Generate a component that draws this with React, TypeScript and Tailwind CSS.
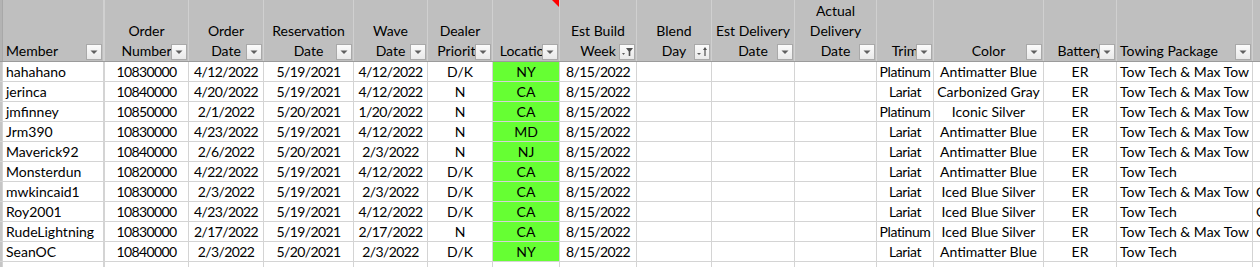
import React from "react";

type Col = {
  label: string[];
  w: string;
  align: "left" | "center";
  btn?: "drop" | "filter" | "sort" | "none";
  comment?: boolean;
  track?: string;
};

const COLS: Col[] = [
  { label: ["Member"], w: "w-[102px] border-r-2 border-r-[#9a9a9a]", align: "left" },
  { label: ["Order", "Number"], w: "w-[84px]", align: "center", track: "tracking-[-0.6px]" },
  { label: ["Order", "Date"], w: "w-[75px]", align: "center", track: "tracking-[-0.6px]" },
  { label: ["Reservation", "Date"], w: "w-[90px]", align: "center", track: "tracking-[-0.6px]" },
  { label: ["Wave", "Date"], w: "w-[74px]", align: "center", track: "tracking-[-0.6px]" },
  { label: ["Dealer", "Priority"], w: "w-[65px]", align: "center" },
  { label: ["Location"], w: "w-[67px]", align: "center", comment: true },
  { label: ["Est Build", "Week"], w: "w-[77px]", align: "center", btn: "filter", track: "tracking-[-0.6px]" },
  { label: ["Blend", "Day"], w: "w-[75px]", align: "center", btn: "sort" },
  { label: ["Est Delivery", "Date"], w: "w-[83px]", align: "center" },
  { label: ["Actual", "Delivery", "Date"], w: "w-[82px]", align: "center" },
  { label: ["Trim"], w: "w-[57px]", align: "center", track: "tracking-[-0.4px]" },
  { label: ["Color"], w: "w-[110px]", align: "center" },
  { label: ["Battery"], w: "w-[73px]", align: "center" },
  { label: ["Towing Package"], w: "w-[136px]", align: "left" },
  { label: [""], w: "w-[120px]", align: "left", btn: "none" },
];

const ROWS: string[][] = [
  ["hahahano", "10830000", "4/12/2022", "5/19/2021", "4/12/2022", "D/K", "NY", "8/15/2022", "", "", "", "Platinum", "Antimatter Blue", "ER", "Tow Tech & Max Tow", ""],
  ["jerinca", "10840000", "4/20/2022", "5/19/2021", "4/12/2022", "N", "CA", "8/15/2022", "", "", "", "Lariat", "Carbonized Gray", "ER", "Tow Tech & Max Tow", ""],
  ["jmfinney", "10850000", "2/1/2022", "5/20/2021", "1/20/2022", "N", "CA", "8/15/2022", "", "", "", "Platinum", "Iconic Silver", "ER", "Tow Tech & Max Tow", ""],
  ["Jrm390", "10830000", "4/23/2022", "5/19/2021", "4/12/2022", "N", "MD", "8/15/2022", "", "", "", "Lariat", "Antimatter Blue", "ER", "Tow Tech & Max Tow", ""],
  ["Maverick92", "10840000", "2/6/2022", "5/20/2021", "2/3/2022", "N", "NJ", "8/15/2022", "", "", "", "Lariat", "Antimatter Blue", "ER", "Tow Tech & Max Tow", ""],
  ["Monsterdun", "10820000", "4/22/2022", "5/19/2021", "4/12/2022", "D/K", "CA", "8/15/2022", "", "", "", "Lariat", "Antimatter Blue", "ER", "Tow Tech", ""],
  ["mwkincaid1", "10830000", "2/3/2022", "5/19/2021", "2/3/2022", "D/K", "CA", "8/15/2022", "", "", "", "Lariat", "Iced Blue Silver", "ER", "Tow Tech & Max Tow", "C"],
  ["Roy2001", "10830000", "4/23/2022", "5/19/2021", "4/12/2022", "D/K", "CA", "8/15/2022", "", "", "", "Lariat", "Iced Blue Silver", "ER", "Tow Tech", "C"],
  ["RudeLightning", "10830000", "2/17/2022", "5/19/2021", "2/17/2022", "N", "CA", "8/15/2022", "", "", "", "Platinum", "Iced Blue Silver", "ER", "Tow Tech & Max Tow", "C"],
  ["SeanOC", "10840000", "2/3/2022", "5/20/2021", "2/3/2022", "D/K", "NY", "8/15/2022", "", "", "", "Lariat", "Antimatter Blue", "ER", "Tow Tech", ""],
  ["", "", "", "", "", "", "", "", "", "", "", "", "", "", "", ""],
];

function FilterButton({ kind }: { kind: "drop" | "filter" | "sort" }) {
  return (
    <div className="absolute right-[1px] bottom-[1px] w-[16px] h-[16px] border border-[#a9a9a9] bg-gradient-to-b from-[#fbfbfb] to-[#e9e9e9] flex items-center justify-center">
      {kind === "drop" && (
        <svg width="14" height="14" viewBox="0 0 14 14">
          <path d="M3.5 5.5 L10.5 5.5 L7 9 Z" fill="#5f5f5f" />
        </svg>
      )}
      {kind === "filter" && (
        <svg width="14" height="14" viewBox="0 0 14 14">
          <path d="M2 8 L5 8 L3.5 10 Z" fill="#5f5f5f" />
          <path d="M6 3 L13 3 L10.3 6.5 L10.3 11 L8.7 11 L8.7 6.5 Z" fill="#4f4f4f" />
        </svg>
      )}
      {kind === "sort" && (
        <svg width="14" height="14" viewBox="0 0 14 14">
          <path d="M2 8 L6 8 L4 10 Z" fill="#5f5f5f" />
          <path d="M10 2 L12 5 L10.6 5 L10.6 11 L9.4 11 L9.4 5 L8 5 Z" fill="#4f4f4f" />
        </svg>
      )}
    </div>
  );
}

export default function App() {
  return (
    <div
      className="w-[1260px] h-[267px] overflow-hidden bg-white text-[14px] text-black"
      style={{ fontFamily: "Lato, 'Open Sans', sans-serif" }}
    >
      <div className="flex w-max h-[62px] bg-[#bfbfbf] border-b border-b-[#9b9b9b]">
        <div className="w-[3px] shrink-0 border-r border-r-[#a8a8a8] bg-[#b3b3b3]" />
        {COLS.map((c, i) => (
          <div
            key={i}
            className={`${c.w} shrink-0 relative border-r border-r-[#d0d0d0] flex flex-col justify-end overflow-hidden whitespace-nowrap leading-[20px] ${
              c.align === "left" ? "items-start pl-[3px]" : "items-center"
            }`}
          >
            {c.label.map((l, j) => (
              <span key={j}>{l}</span>
            ))}
            {c.btn !== "none" && <FilterButton kind={c.btn ?? "drop"} />}
            {c.comment && (
              <svg className="absolute top-0 right-0" width="7" height="7" viewBox="0 0 7 7">
                <path d="M0 0 L7 0 L7 7 Z" fill="#ff0000" />
              </svg>
            )}
          </div>
        ))}
      </div>
      {ROWS.map((r, ri) => (
        <div key={ri} className="flex w-max h-[20px] border-b border-b-[#d4d4d4]">
          <div className="w-[3px] shrink-0 border-r border-r-[#d4d4d4] bg-[#c6c6c6]" />
          {COLS.map((c, i) => (
            <div
              key={i}
              className={`${c.w} shrink-0 border-r border-r-[#d4d4d4] overflow-hidden whitespace-nowrap leading-[19px] ${
                c.align === "left" ? "text-left pl-[3px]" : "text-center"
              } ${c.track ?? ""} ${i === 6 && r[0] !== "" ? "bg-[#66ff33]" : ""}`}
            >
              {r[i]}
            </div>
          ))}
        </div>
      ))}
    </div>
  );
}
